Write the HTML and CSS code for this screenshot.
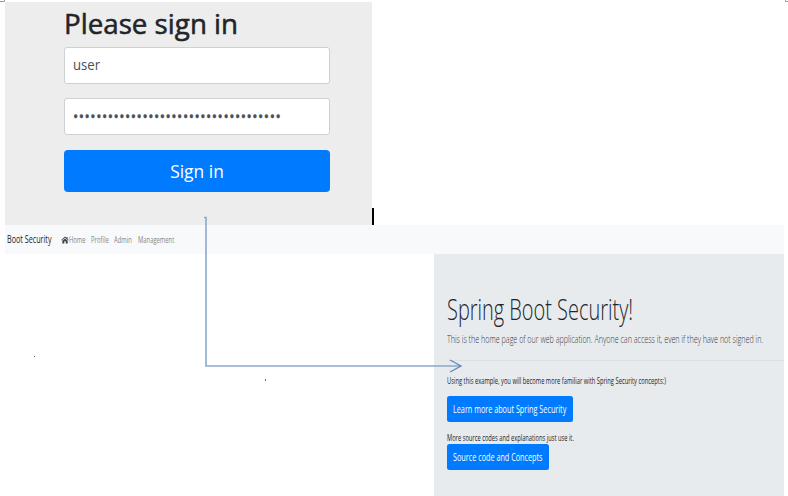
FILE: index.html
```
<!DOCTYPE html>
<html lang="en">
<head>
<meta charset="utf-8">
<title>Boot Security</title>
<link rel="stylesheet" href="styles.css">
</head>
<body>
<div class="page">
  <section class="login">
    <h1 class="login-title"><span class="fit">Please sign in</span></h1>
    <div class="field"><span class="fit user">user</span></div>
    <div class="field"><span class="dots">••••••••••••••••••••••••••••••••••••</span></div>
    <div class="signin">Sign in</div>
  </section>
  <nav class="navbar">
    <div class="brand"><span class="fit">Boot Security</span></div>
    <div class="link home">
      <svg class="house" viewBox="0 0 8 8"><path d="M4 .6 .2 4l.5.6L4 1.8l3.3 2.8.5-.6L6.6 2.9V.9H5.5V2z"/><path d="M4 2.5 1.3 4.8v2.8h2V5.3h1.4v2.3h2V4.8z"/></svg><span class="fit">Home</span>
    </div>
    <div class="link profile"><span class="fit">Profile</span></div>
    <div class="link admin"><span class="fit">Admin</span></div>
    <div class="link management"><span class="fit">Management</span></div>
  </nav>
  <main class="jumbotron">
    <h2 class="headline"><span class="fit">Spring Boot Security!</span></h2>
    <p class="lead"><span class="fit">This is the home page of our web application. Anyone can access it, even if they have not signed in.</span></p>
    <hr class="rule">
    <p class="note"><span class="fit">Using this example, you will become more familiar with Spring Security concepts:)</span></p>
    <div class="btn learn"><span class="fit">Learn more about Spring Security</span></div>
    <p class="note more"><span class="fit">More source codes and explanations just use it.</span></p>
    <div class="btn source"><span class="fit">Source code and Concepts</span></div>
  </main>
</div>
<svg class="overlay" viewBox="0 0 788 496">
  <path class="flow" d="M204 217.5H206V366H460"/>
  <path class="head" d="M450 360L461 366L450 372"/>
  <path class="caret" d="M372 208h2v17h-2z"/>
  <path class="corner" d="M0 1.5H4.500V0M785.500 0V1.500H788"/>
  <path class="speck" d="M34 356h1v1h-1zM265 379h1v2h-1z"/>
</svg>
</body>
</html>
```
FILE: styles.css
```
* { box-sizing: border-box; }
body {
  margin: 0;
  background: #fff;
  color: #212529;
  font-family: "Open Sans", "Noto Sans", sans-serif;
  overflow: hidden;
}
h1, h2, p { margin: 0; }
.page { width: 788px; height: 496px; padding: 2px 4px 0 5px; }

/* condensed text: laid out wide, squeezed from the left edge */
.fit { display: inline-block; white-space: nowrap; transform-origin: 0 50%; }

.login { width: 367px; height: 223px; padding: 4px 42px 0 59px; background: #ededed; }
.login-title { height: 40.5px; font-size: 28px; font-weight: 500; line-height: 34px; -webkit-text-stroke: .55px #212529; }
.login-title .fit { transform: scaleX(.99); }
.field {
  display: flex;
  align-items: center;
  height: 37px;
  margin-bottom: 14.5px;
  padding-left: 8px;
  border: 1px solid #ced0d2;
  border-radius: 3px;
  background: #fff;
  color: #495057;
  font-size: 14px;
  line-height: 20px;
}
.user { transform: scaleX(.94); }
.dots { font-size: 14px; letter-spacing: .52px; white-space: nowrap; -webkit-text-stroke: .4px #495057; }
.signin {
  height: 42.5px;
  border-radius: 4px;
  background: #007bff;
  color: #fff;
  font-size: 17.4px;
  line-height: 43px;
  text-align: center;
}

.navbar { display: flex; width: 779px; height: 29px; padding-left: 2px; background: #f8f9fb; line-height: 29px; }
.brand { width: 54px; font-size: 10.5px; color: #222; }
.brand .fit { transform: scaleX(.685); }
.link { font-size: 8.5px; color: #85878a; }
.link .fit { transform: scaleX(.69); }
.home { display: flex; align-items: center; width: 30px; }
.house { flex: none; width: 8px; height: 8px; fill: #444; }
.profile { width: 23px; }
.admin { width: 24px; }

.jumbotron {
  width: 350px;
  height: 242px;
  margin-left: 429px;
  padding: 40px 0 0 12.5px;
  background: #e8ebee;
}
.headline { height: 38px; font-size: 30px; font-weight: 300; line-height: 30px; }
.headline .fit { transform: scaleX(.665); }
.lead { height: 28px; overflow: hidden; font-size: 10.7px; font-weight: 300; line-height: 14px; color: #33373b; }
.lead .fit { transform: scaleX(.67); }
.rule { height: 1px; margin: 0; border: 0; background: #dcdfe2; }
.note { height: 34.5px; padding-top: 13.5px; overflow: hidden; font-size: 9px; line-height: 12px; }
.note .fit { transform: scaleX(.642); }
.more { height: 22.5px; padding-top: 10px; }
.more .fit { transform: scaleX(.637); }
.btn { height: 26px; padding-left: 6.5px; border-radius: 2.5px; background: #007bff; color: #fff; font-size: 10.3px; line-height: 26px; }
.btn .fit { transform: scaleX(.704); }
.learn { width: 126px; overflow: hidden; }
.source { width: 102.5px; overflow: hidden; }

.overlay { position: absolute; left: 0; top: 0; width: 788px; height: 496px; fill: none; }
.flow { stroke: #8ba8cb; stroke-width: 1.6; }
.head { stroke: #5f86b8; stroke-width: 1.3; }
.caret { fill: #000; }
.corner { stroke: #999; }
.speck { fill: #667; }
```
